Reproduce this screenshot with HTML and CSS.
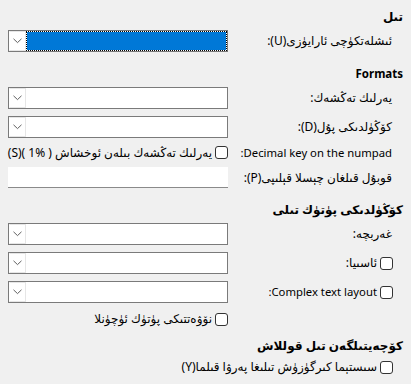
FILE: index.html
```html
<!DOCTYPE html>
<html lang="ug" dir="rtl">
<head>
<meta charset="utf-8">
<title>Language settings</title>
<link rel="stylesheet" href="styles.css">
</head>
<body>
<div class="page">
  <div class="heading h-first">تىل</div>
  <div class="grid">
    <div class="label">ئىشلەتكۈچى ئارايۈزى(U):</div>
    <div class="combo focused">
      <span class="value"><span class="sel"></span></span>
      <span class="arrow"><svg width="9" height="6" viewBox="0 0 9 6"><polyline points="0.5,0.8 4.5,4.6 8.5,0.8" fill="none" stroke="#606060" stroke-width="1"/></svg></span>
    </div>
  </div>

  <div class="heading latin-h">Formats</div>
  <div class="grid">
    <div class="label">يەرلىك تەڭشەك:</div>
    <div class="combo">
      <span class="value"></span>
      <span class="arrow"><svg width="9" height="6" viewBox="0 0 9 6"><polyline points="0.5,0.8 4.5,4.6 8.5,0.8" fill="none" stroke="#606060" stroke-width="1"/></svg></span>
    </div>
    <div class="label">كۆڭۈلدىكى پۇل(D):</div>
    <div class="combo">
      <span class="value"></span>
      <span class="arrow"><svg width="9" height="6" viewBox="0 0 9 6"><polyline points="0.5,0.8 4.5,4.6 8.5,0.8" fill="none" stroke="#606060" stroke-width="1"/></svg></span>
    </div>
    <div class="label row-short latin">Decimal key on the numpad:</div>
    <label class="check row-short"><span class="box"></span><span>يەرلىك تەڭشەك بىلەن ئوخشاش ( %1 )(S)</span></label>
    <div class="label">قوبۇل قىلغان چېسلا قېلىپى(P):</div>
    <div class="entry"></div>
  </div>

  <div class="heading">كۆڭۈلدىكى پۈتۈك تىلى</div>
  <div class="grid">
    <div class="label">غەربچە:</div>
    <div class="combo">
      <span class="value"></span>
      <span class="arrow"><svg width="9" height="6" viewBox="0 0 9 6"><polyline points="0.5,0.8 4.5,4.6 8.5,0.8" fill="none" stroke="#606060" stroke-width="1"/></svg></span>
    </div>
    <label class="check label-check"><span class="box"></span><span>ئاسىيا:</span></label>
    <div class="combo">
      <span class="value"></span>
      <span class="arrow"><svg width="9" height="6" viewBox="0 0 9 6"><polyline points="0.5,0.8 4.5,4.6 8.5,0.8" fill="none" stroke="#606060" stroke-width="1"/></svg></span>
    </div>
    <label class="check label-check"><span class="box"></span><span class="latin">Complex text layout:</span></label>
    <div class="combo">
      <span class="value"></span>
      <span class="arrow"><svg width="9" height="6" viewBox="0 0 9 6"><polyline points="0.5,0.8 4.5,4.6 8.5,0.8" fill="none" stroke="#606060" stroke-width="1"/></svg></span>
    </div>
    <div class="spacer"></div>
    <label class="check row-check"><span class="box"></span><span>نۆۋەتتىكى پۈتۈك ئۈچۈنلا</span></label>
  </div>

  <div class="heading h-last">كۆچەيتىلگەن تىل قوللاش</div>
  <label class="check solo"><span class="box"></span><span>سىستېما كىرگۈزۈش تىلىغا پەرۋا قىلما(Y)</span></label>
</div>
</body>
</html>
```

FILE: styles.css
```css
html, body {
  margin: 0;
  padding: 0;
  background: #f0f0f0;
}

body {
  font-family: "Noto Sans", "DejaVu Sans", sans-serif;
  font-size: 12px;
  color: #000;
}

.page {
  width: 411px;
  height: 384px;
  box-sizing: border-box;
  padding: 9px 8px 0 8px;
  overflow: hidden;
}

.heading {
  font-weight: bold;
  height: 16px;
  line-height: 16px;
  margin: 14px 0 5px 0;
  white-space: nowrap;
}

.latin-h {
  font-size: 11.5px;
}

.h-first {
  margin-top: 0;
}

.h-last {
  margin-top: 10px;
}

.grid {
  display: grid;
  grid-template-columns: minmax(0, 1fr) 220px;
  column-gap: 8px;
  row-gap: 7px;
  padding-right: 11px;
  align-items: center;
}

.label {
  white-space: nowrap;
  line-height: 16px;
  min-width: 0;
}

.latin {
  font-size: 11.3px;
}

.row-short {
  height: 15px;
  display: flex;
  align-items: center;
}

.combo {
  height: 22px;
  box-sizing: border-box;
  border: 1px solid #7a7a7a;
  background: #fff;
  display: flex;
  flex-direction: row;
}

.combo .value {
  flex: 1;
  display: flex;
}

.combo .arrow {
  width: 17px;
  box-sizing: border-box;
  border: 1px solid #e6e6e6;
  border-left-color: #fff;
  background: #fff;
  display: flex;
  align-items: center;
  justify-content: center;
}

.combo.focused .value {
  background: #fff;
}

.combo.focused .sel {
  flex: 1;
  background: #0078d7;
  background-clip: padding-box;
  border: 1px dotted #000;
}

.entry {
  height: 21px;
  box-sizing: border-box;
  background: #fff;
  border-bottom: 1px solid #8a8a8a;
}

.check {
  display: flex;
  align-items: center;
  gap: 3px;
  white-space: nowrap;
  line-height: 16px;
}

.box {
  width: 13px;
  height: 13px;
  box-sizing: border-box;
  border: 1px solid #333;
  border-radius: 3px;
  background: #fff;
  flex: none;
}

.label-check {
  margin-right: -1px;
}

.row-check {
  height: 18px;
}

.spacer {
  height: 18px;
}

.solo {
  height: 16px;
  margin-top: 5px;
  padding-right: 10px;
}
```
